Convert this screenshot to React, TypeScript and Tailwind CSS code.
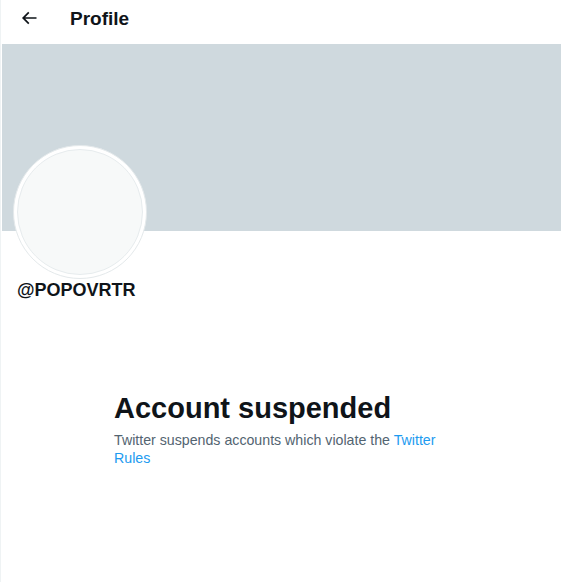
import React from "react";

export default function App() {
  return (
    <div
      className="w-[561px] h-[582px] bg-white border-l border-[#eff3f4] overflow-hidden"
      style={{ fontFamily: '"Liberation Sans", Arial, sans-serif' }}
    >
      <div className="h-[44px] flex items-start pt-[8px] pl-[18px]">
        <svg viewBox="0 0 24 24" className="w-[20px] h-[20px] mt-0" fill="#0f1419">
          <path d="M7.414 13l5.043 5.04-1.414 1.42L3.586 12l7.457-7.46 1.414 1.42L7.414 11H21v2H7.414z" />
        </svg>
        <div className="ml-[31px] mt-[-1px] text-[19px] leading-[24px] font-bold text-[#0f1419]">
          Profile
        </div>
      </div>
      <div className="ml-[1px] h-[187px] bg-[#cfd9de]" />
      <div className="pl-[12px]">
        <div className="mt-[-86px] w-[134px] h-[134px] rounded-full bg-white border border-[#e4e9eb] p-[3px]">
          <div className="w-full h-full rounded-full bg-[#f7f9f9] border border-[#e7ecee]" />
        </div>
      </div>
      <div className="pl-[16px] mt-[-1px] text-[18px] leading-[24px] font-bold text-[#0f1419]">
        @POPOVRTR
      </div>
      <div className="pl-[113px] mt-[88px] w-[450px]">
        <div className="text-[29px] leading-[36px] font-bold text-[#0f1419]">Account suspended</div>
        <p className="mt-[5px] text-[14.2px] leading-[18px] text-[#536471]">
          Twitter suspends accounts which violate the <a className="text-[#1d9bf0]">Twitter Rules</a>
        </p>
      </div>
    </div>
  );
}
